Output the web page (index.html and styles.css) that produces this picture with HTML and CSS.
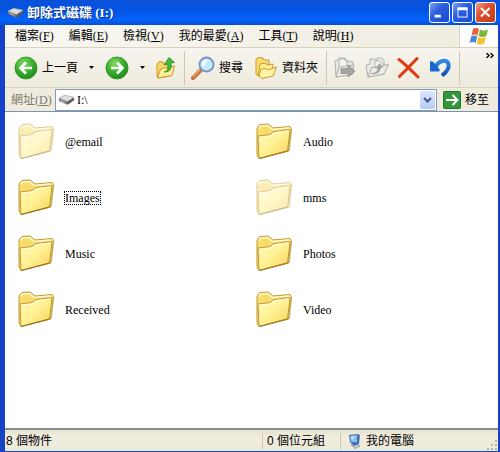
FILE: index.html
```html
<!DOCTYPE html>
<html lang="zh-Hant">
<head>
    <meta charset="UTF-8">
    <meta name="viewport" content="width=device-width, initial-scale=1.0">
    <title>卸除式磁碟 (I:)</title>
    <link rel="stylesheet" href="styles.css">
</head>
<body>
    <!-- Shared shapes -->
    <svg class="defs" aria-hidden="true">
        <defs>
            <linearGradient id="folderFill" x1="0" y1="0" x2="1" y2="1">
                <stop offset="0" stop-color="#fffbb8"/>
                <stop offset="0.5" stop-color="#fff092"/>
                <stop offset="1" stop-color="#f8d050"/>
            </linearGradient>
            <radialGradient id="greenFill" cx="0.4" cy="0.3" r="0.7">
                <stop offset="0" stop-color="#7fdc62"/>
                <stop offset="0.6" stop-color="#38ac2c"/>
                <stop offset="1" stop-color="#1f8a1a"/>
            </radialGradient>
            <linearGradient id="blueFill" x1="0" y1="0" x2="0" y2="1">
                <stop offset="0" stop-color="#3288e6"/>
                <stop offset="1" stop-color="#0b50b4"/>
            </linearGradient>
        </defs>
        <symbol id="folder" viewBox="0 0 38 38">
            <path d="M5 36 L24 31 L35 28 L37 8 L34 8 L33 24 Z" fill="#b3a878" opacity="0.5"/>
            <path d="M2 5 L5 1.500 L13 1 L18 5 L35 3.500 L36.500 5.500 L33.500 28 L4 35.500 L2 32 Z" fill="#f7dc6c" stroke="#c09834"/>
            <path d="M3.500 5.500 L5.500 3 L12.500 2.500 L17.500 6.500 L34.500 5" fill="none" stroke="#fff9cc" stroke-width="1.500"/>
            <path d="M3 13 L15 11.500 L19 8.500 L35 6.500 L32.500 28 L4 35.500 Z" fill="url(#folderFill)" stroke="#c29a34"/>
            <path d="M4.500 14.500 L15.500 12.800 L19.500 9.800 L33.500 8" fill="none" stroke="#fffee6"/>
            <path d="M4 35.500 L32.500 28" stroke="#94742a" stroke-width="1.200"/>
        </symbol>
        <symbol id="drive" viewBox="0 0 18 12">
            <path d="M1 4 L7 1 L17 3 L17 6 L10 11 L1 7 Z" fill="#777"/>
            <path d="M1 4 L7 1 L17 3 L10 7.500 Z" fill="#ddd" stroke="#aaa" stroke-width="0.500"/>
            <path d="M10 8 L17 3.500 L17 6 L10 11 Z" fill="#555"/>
            <path d="M3 6.500 L7 8.300" stroke="#ccc"/>
        </symbol>
        <symbol id="miniFolders" viewBox="0 0 24 24">
            <path d="M2 3 L4 1.500 L9 2 L10 4 L15 4 L15 8 L4 20 L2 18 Z" fill="#f8dd70" stroke="#d09a28"/>
            <path d="M6 8 L12 7 L13 9 L19 8 L18 17 L7 20 L4 20 Z" fill="#fdeb98" stroke="#cf9a2a"/>
            <path d="M7 13 L12 12.500 L14 14 L22.500 11 L19 20 L8 22.500 L5 20 Z" fill="#fff4a6" stroke="#cf9a2a"/>
        </symbol>
    </svg>

    <div class="window">
        <header class="titlebar">
            <svg class="drive"><use href="#drive"/></svg>
            <h1>卸除式磁碟 (I:)</h1>
            <div class="controls">
                <button type="button" class="control" aria-label="Minimize">
                    <svg viewBox="0 0 21 21"><rect x="5" y="13" width="7" height="3" fill="#fff"/></svg>
                </button>
                <button type="button" class="control" aria-label="Maximize">
                    <svg viewBox="0 0 21 21"><path d="M5 5h11v3H5z" fill="#fff"/><rect x="5.500" y="5.500" width="10" height="10" fill="none" stroke="#fff"/></svg>
                </button>
                <button type="button" class="control close" aria-label="Close">
                    <svg viewBox="0 0 21 21"><path d="M5.500 5.500 L15 15 M15 5.500 L5.500 15" stroke="#fff" stroke-width="2.200"/></svg>
                </button>
            </div>
        </header>

        <div class="menubar">
            <nav class="menu">
                <a href="#">檔案(<u>F</u>)</a>
                <a href="#">編輯(<u>E</u>)</a>
                <a href="#">檢視(<u>V</u>)</a>
                <a href="#">我的最愛(<u>A</u>)</a>
                <a href="#">工具(<u>T</u>)</a>
                <a href="#">說明(<u>H</u>)</a>
            </nav>
            <div class="flag">
                <svg viewBox="0 0 20 18" width="20" height="18">
                    <path d="M4 2 C6 0.500 8 0.500 10 2 L8.500 8.500 C6.500 7 4.500 7 2.500 8.500 Z" fill="#e8623a"/>
                    <path d="M11 2.500 C13 4 16 4 19 2.500 L17.300 9 C15 10.500 12 10.500 9.500 9 Z" fill="#7cb83c"/>
                    <path d="M2.200 9.500 C4.200 8 6.500 8 8.200 9.500 L6.700 16 C4.700 14.500 2.500 14.500 0.500 16 Z" fill="#4a86dc"/>
                    <path d="M9.200 10 C11.500 11.500 14.500 11.500 17 10 L15.300 16.500 C13 18 10 18 7.700 16.500 Z" fill="#f5c32e"/>
                </svg>
            </div>
        </div>

        <div class="toolbar">
            <button type="button" class="tool">
                <svg viewBox="0 0 24 24" width="24" height="24">
                    <circle cx="12" cy="12" r="11" fill="url(#greenFill)" stroke="#3c9a34"/>
                    <path d="M18 12 H7 M12 6.500 L6.500 12 L12 17.500" fill="none" stroke="#fff" stroke-width="2.600"/>
                </svg>
                <span>上一頁</span>
            </button>
            <button type="button" class="arrow" aria-label="Back history"><svg viewBox="0 0 5 3" width="5" height="3"><path d="M0 0H5L2.500 3Z"/></svg></button>
            <button type="button" class="tool" aria-label="Forward">
                <svg viewBox="0 0 24 24" width="24" height="24">
                    <circle cx="12" cy="12" r="11" fill="url(#greenFill)" stroke="#3c9a34"/>
                    <path d="M6 12 H17 M12 6.500 L17.500 12 L12 17.500" fill="none" stroke="#fff" stroke-width="2.600"/>
                </svg>
            </button>
            <button type="button" class="arrow" aria-label="Forward history"><svg viewBox="0 0 5 3" width="5" height="3"><path d="M0 0H5L2.500 3Z"/></svg></button>
            <button type="button" class="tool" aria-label="Up">
                <svg viewBox="0 0 20 24" width="20" height="24">
                    <path d="M1 8 L3 5.500 L7 6 L8 8 L14 7 L14 20 L3 22 L1 21 Z" fill="#f6d668" stroke="#cf9a2a"/>
                    <path d="M1.500 22 L4.500 13 L9 12 L18.500 10 L16 19.500 Z" fill="#fff0a0" stroke="#cf9a2a"/>
                    <path d="M8 16 C12 15 12.500 12 11.500 8 L8 9 L13 1.500 L18.500 6.500 L15 7 C16 13 14 16 8 16 Z" fill="#48b53c" stroke="#238a20" stroke-width="0.800"/>
                </svg>
            </button>
            <span class="separator"></span>
            <button type="button" class="tool">
                <svg viewBox="0 0 24 24" width="24" height="24">
                    <path d="M2 22 L9.500 14.500" stroke="#bd7038" stroke-width="4" stroke-linecap="round"/>
                    <path d="M2 21 L9 14" stroke="#e8ac74" stroke-width="1.200"/>
                    <circle cx="15.500" cy="8.500" r="7" fill="#c4ebfb" stroke="#7593c8" stroke-width="1.800"/>
                    <path d="M11 8 C11 5 14 3.500 17 4.500 L12 11 Z" fill="#fff" opacity="0.800"/>
                </svg>
                <span>搜尋</span>
            </button>
            <button type="button" class="tool folders">
                <svg width="24" height="24"><use href="#miniFolders"/></svg>
                <span>資料夾</span>
            </button>
            <span class="separator"></span>
            <div class="actions">
                <button type="button" class="tool" aria-label="Move to">
                    <svg viewBox="0 0 24 24" width="24" height="24">
                        <path d="M2 5 L5 4 L6 2 L12 2 L14 5 L20 6 L20 18 L3 21 Z" fill="#e6e5e0" stroke="#b0b0ac"/>
                        <path d="M6 3 H11 L14 6 V18 H6 Z" fill="#f5f4f1" stroke="#b4b4b0"/>
                        <path d="M3 21 L6 11 L21 9 L18 19 Z" fill="#edece8" stroke="#b0b0ac"/>
                        <path d="M8 12.500 H15 V9 L22 15 L15 21 V17.500 H8 Z" fill="#a4a4a2" stroke="#8e8e8c" stroke-width="0.800"/>
                    </svg>
                </button>
                <button type="button" class="tool" aria-label="Copy to">
                    <svg viewBox="0 0 24 24" width="24" height="24">
                        <path d="M1 9 L5 8 L5 3 H10 L12 5 L12 2 H17 L19 4 V15 L3 21 Z" fill="#eae9e4" stroke="#b0b0ac"/>
                        <path d="M10 5 H15 L18 8 V16 H10 Z" fill="#f5f4f1" stroke="#b8b8b4"/>
                        <path d="M3 21 L7 11 L12 12 L23.500 8 L19 18 Z" fill="#edece8" stroke="#a9a9a5"/>
                        <path d="M6 17 C11 17 12 15 13 12 L10 12 L15 7 L18 12 L16 12 C15 16 12 19 6 18 Z" fill="#a4a4a2"/>
                    </svg>
                </button>
                <button type="button" class="tool" aria-label="Delete">
                    <svg viewBox="0 0 24 24" width="24" height="24">
                        <path d="M2 3.500 C8 8 15 15 21 21 M20 2.500 C15 8 8 15 2.500 20.500" fill="none" stroke="#e23a14" stroke-width="3" stroke-linecap="round"/>
                    </svg>
                </button>
                <button type="button" class="tool" aria-label="Undo">
                    <svg viewBox="0 0 24 24" width="24" height="24">
                        <path d="M6.500 11 C10 4 18 3 19.500 8 C20.500 12.500 17 16.500 13 19.500" fill="none" stroke="url(#blueFill)" stroke-width="4"/>
                        <path d="M1 5 L4.500 6 L11 14 L10 15.500 L1 15.500 Z" fill="#1b66cc"/>
                    </svg>
                </button>
            </div>
            <span class="separator last"></span>
            <button type="button" class="more" aria-label="More">
                <svg viewBox="0 0 8 5" width="8" height="5"><path d="M0.500 0 L3 2.500 L0.500 5 M4.500 0 L7 2.500 L4.500 5" fill="none" stroke="#000" stroke-width="1.400"/></svg>
            </button>
        </div>

        <form class="address">
            <label for="path">網址(<u>D</u>)</label>
            <div class="combo">
                <svg class="drive"><use href="#drive"/></svg>
                <input type="text" id="path" value="I:\">
                <button type="button" class="drop" aria-label="Show addresses">
                    <svg viewBox="0 0 9 6" width="9" height="6"><path d="M1 1 L4.500 4.500 L8 1" fill="none" stroke="#41578c" stroke-width="2"/></svg>
                </button>
            </div>
            <button type="button" class="go">
                <svg viewBox="0 0 18 18" width="18" height="18">
                    <rect x="0.500" y="0.500" width="17" height="17" rx="1" fill="#32963a" stroke="#217428"/>
                    <path d="M3 9 H14 M9.500 4 L14.500 9 L9.500 14" fill="none" stroke="#fff" stroke-width="2"/>
                </svg>
                <span>移至</span>
            </button>
        </form>

        <main class="files">
            <a href="#" class="file faded"><svg><use href="#folder"/></svg><span>@email</span></a>
            <a href="#" class="file"><svg><use href="#folder"/></svg><span>Audio</span></a>
            <a href="#" class="file focused"><svg><use href="#folder"/></svg><span>Images</span></a>
            <a href="#" class="file faded"><svg><use href="#folder"/></svg><span>mms</span></a>
            <a href="#" class="file"><svg><use href="#folder"/></svg><span>Music</span></a>
            <a href="#" class="file"><svg><use href="#folder"/></svg><span>Photos</span></a>
            <a href="#" class="file"><svg><use href="#folder"/></svg><span>Received</span></a>
            <a href="#" class="file"><svg><use href="#folder"/></svg><span>Video</span></a>
        </main>

        <footer class="statusbar">
            <div class="count">8 個物件</div>
            <div class="size">0 個位元組</div>
            <div class="zone">
                <svg viewBox="0 0 14 16" width="14" height="16">
                    <path d="M3 12 L9 11 L12 13 L7 15.500 Z" fill="#c8cbd4" stroke="#7c8090" stroke-width="0.600"/>
                    <path d="M1 2 L9 1 L12 2 L11 11 L6 13 L2 9 Z" fill="#4d6eb4"/>
                    <path d="M2 3 L9 2 L9 9 L3 9 Z" fill="#7cc2f6"/>
                    <path d="M3 4 L7 3 L4 7 Z" fill="#d4efff"/>
                </svg>
                <span>我的電腦</span>
            </div>
            <svg class="grip" viewBox="0 0 11 11" width="11" height="11">
                <path d="M8 0h2v2h-2z M4 4h2v2h-2z M8 4h2v2h-2z M0 8h2v2h-2z M4 8h2v2h-2z M8 8h2v2h-2z" fill="#b8b49e"/>
            </svg>
        </footer>
    </div>
</body>
</html>
```

FILE: styles.css
```css
* {
    box-sizing: border-box;
}

body {
    margin: 0;
    font-family: "Liberation Serif", "Noto Sans CJK TC", serif;
    font-size: 12px;
    line-height: 16px;
    color: #000;
}

a {
    color: inherit;
    text-decoration: none;
}

button {
    padding: 0;
    border: none;
    background: none;
    font: inherit;
    color: inherit;
}

svg {
    display: block;
    flex: none;
}

.defs {
    position: absolute;
    width: 0;
    height: 0;
}

.window {
    display: flex;
    flex-direction: column;
    min-height: 100vh;
    background: #ece9d8;
    border: solid #1642c8;
    border-width: 0 2px 1px 5px;
}

/* Title bar */
.titlebar {
    display: flex;
    align-items: center;
    height: 25px;
    margin-left: -5px;
    margin-right: -2px;
    padding-left: 7px;
    padding-right: 4px;
    background: linear-gradient(#0a50d8, #0354e2 40%, #0562fa 80%, #0450d8);
}

.drive {
    width: 17px;
    height: 12px;
}

.titlebar h1 {
    flex: 1;
    margin: 0 0 0 3px;
    font-size: 13px;
    font-weight: bold;
    color: #fff;
    text-shadow: 1px 1px #0a2f90;
}

.controls {
    display: flex;
    gap: 2px;
}

.control {
    width: 21px;
    height: 21px;
    border: 1px solid #fff;
    border-radius: 3px;
    background: linear-gradient(135deg, #7fa4f4, #2a5fe0 40%, #1a4ccc);
}

.control.close {
    background: linear-gradient(135deg, #f0a088, #dc5030 40%, #c03c18);
}

.control svg {
    width: 19px;
    height: 19px;
}

/* Menu */
.menubar {
    display: flex;
    height: 23px;
    border-bottom: 1px solid #d8d2bd;
    background: linear-gradient(90deg, #f8f7f2, #efecdf);
}

.menu {
    display: flex;
    flex: 1;
    align-items: center;
    gap: 15px;
    padding-left: 10px;
}

.flag {
    display: flex;
    align-items: center;
    justify-content: center;
    width: 39px;
    border-left: 1px solid #d8d2bd;
    background: #fff;
}

/* Toolbar */
.toolbar {
    display: flex;
    align-items: center;
    height: 40px;
    padding-left: 9px;
    border-bottom: 1px solid #d8d2bd;
    background: linear-gradient(#f6f4ee, #eeebdd);
}

.tool {
    display: flex;
    align-items: center;
    gap: 4px;
}

.arrow {
    display: flex;
    justify-content: center;
    width: 27px;
}

.folders {
    margin-left: 11px;
}

.separator {
    width: 1px;
    height: 34px;
    margin: 0 6px 0 8px;
    background: #cdc8b4;
}

.actions {
    display: flex;
    gap: 8px;
}

.separator.last {
    margin: 0 6px;
}

.more {
    align-self: flex-start;
    margin: 5px 4px 0 auto;
}

/* Address bar */
.address {
    display: flex;
    align-items: center;
    height: 23px;
    margin: 0;
    padding-left: 6px;
    background: #efecdf;
}

.address label {
    width: 44px;
    color: #7d7a6e;
}

.combo {
    display: flex;
    flex: 1;
    align-items: center;
    height: 22px;
    padding: 0 1px 0 2px;
    border: 1px solid #7f9db9;
    background: #fff;
}

.combo input {
    flex: 1;
    min-width: 0;
    padding: 0 2px;
    border: none;
    outline: none;
    background: none;
    font: inherit;
}

.drop {
    display: flex;
    align-items: center;
    justify-content: center;
    width: 15px;
    height: 18px;
    border-radius: 2px;
    background: linear-gradient(#dbe5fe, #b9cbf6);
}

.go {
    display: flex;
    align-items: center;
    gap: 4px;
    margin: 0 9px 0 6px;
}

/* Folder list */
.files {
    display: grid;
    flex: 1;
    grid-template-columns: repeat(2, 238px);
    grid-auto-rows: 56px;
    padding: 2px 0 0 12px;
    border-top: 1px solid #7f94a8;
    border-bottom: 2px solid #8c8c8c;
    background: #fff;
}

.file {
    display: flex;
    align-items: center;
    gap: 9px;
}

.file svg {
    width: 38px;
    height: 38px;
}

.file span {
    border: 1px solid transparent;
    line-height: 12px;
}

.file.focused span {
    border: 1px dotted #000;
}

.file.faded svg {
    opacity: 0.5;
}

/* Status bar */
.statusbar {
    display: flex;
    align-items: center;
    height: 21px;
    background: linear-gradient(#e6e2d0, #f0edde 30%, #ece9d8);
    font-family: "Liberation Sans", "Noto Sans CJK TC", sans-serif;
}

.count {
    flex: 1;
    padding-left: 1px;
}

.size,
.zone {
    padding-left: 4px;
    border-left: 1px solid #cbc7b4;
}

.size {
    width: 78px;
}

.zone {
    display: flex;
    align-items: center;
    gap: 4px;
    width: 147px;
    padding-left: 7px;
}

.grip {
    align-self: flex-end;
}
```
